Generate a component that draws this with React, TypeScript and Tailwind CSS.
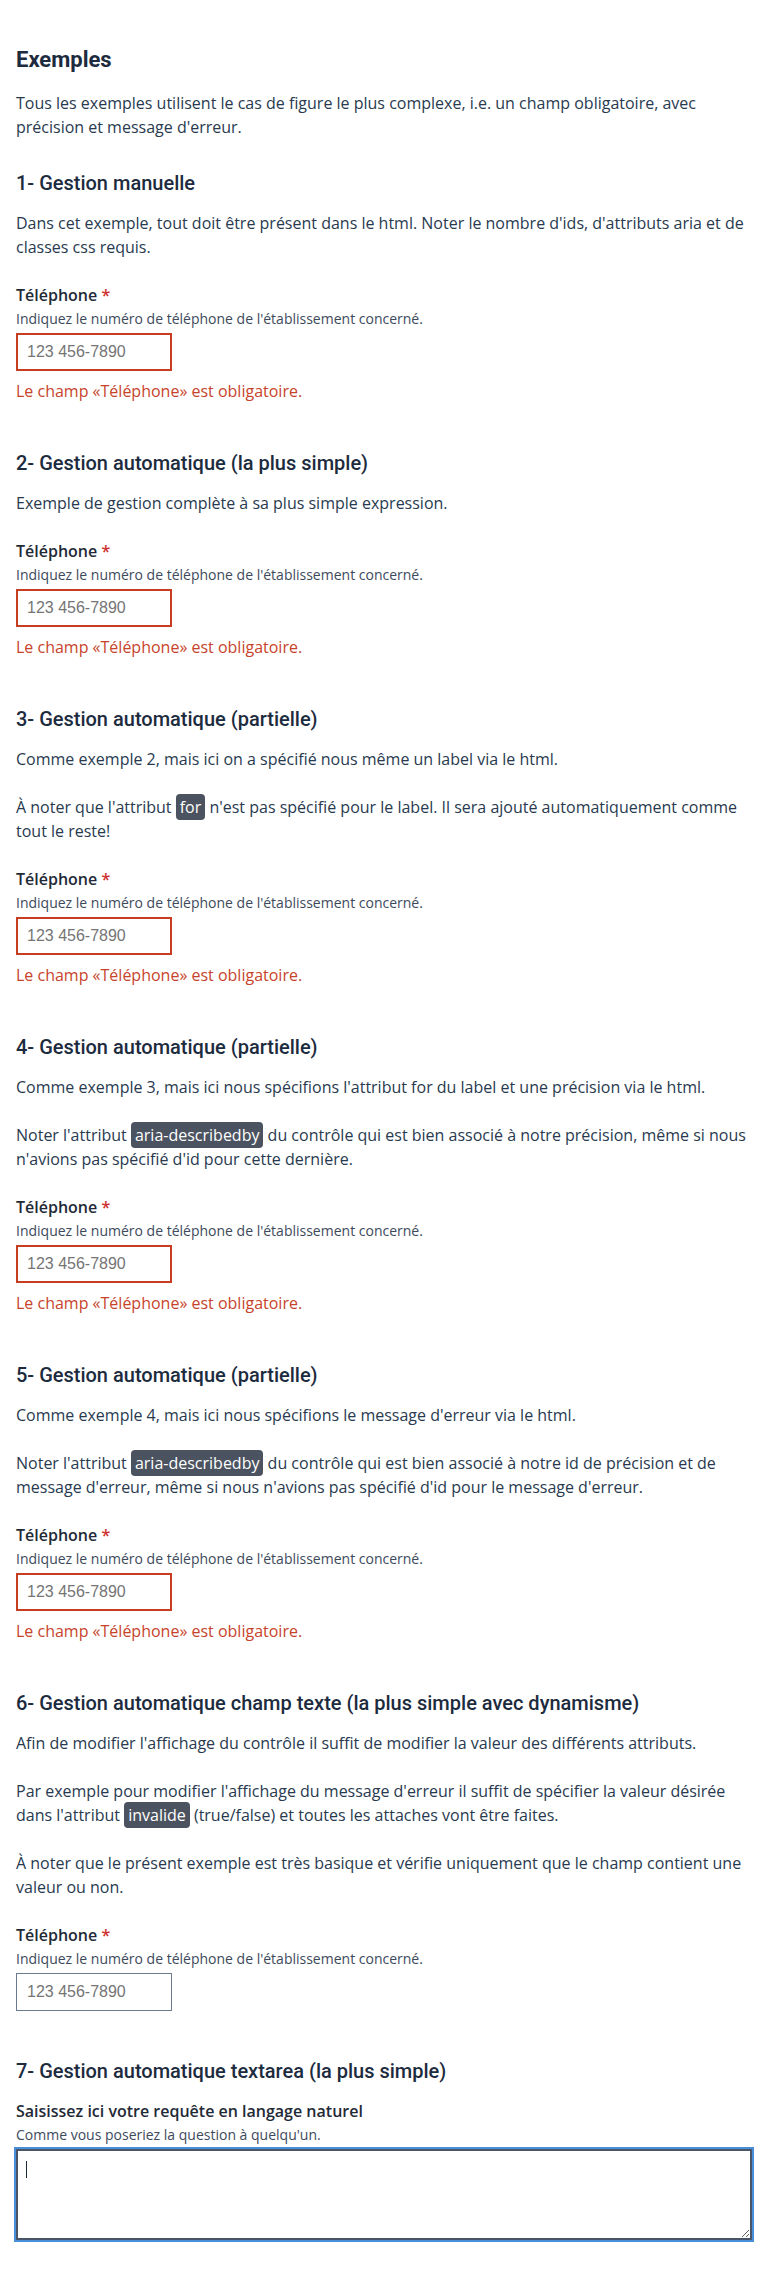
import React from "react";

const chip =
  "rounded-[4px] bg-[#4b5360] px-[4px] py-[2px] text-white";

function Heading({ children, first }: { children: React.ReactNode; first?: boolean }) {
  return (
    <h2
      className={
        (first ? "mt-[30px] " : "mt-[46px] ") +
        "mb-[14px] font-['Roboto',sans-serif] text-[20px] leading-[28px] font-medium text-[#1d2b3e]"
      }
    >
      {children}
    </h2>
  );
}

function Field({ error = true }: { error?: boolean }) {
  return (
    <div>
      <label className="block text-[16px] leading-6 font-semibold text-[#1f2a37]">
        Téléphone <span className="text-[#d0312d]">*</span>
      </label>
      <p className="mt-[3px] text-[14px] leading-[18px] text-[#3d4a5c]">
        Indiquez le numéro de téléphone de l'établissement concerné.
      </p>
      {error ? (
        <input
          type="tel"
          placeholder="123 456-7890"
          className="mt-[5px] block h-[38px] w-[156px] border-2 border-[#c83d22] bg-white pl-[9px] font-['Liberation_Sans',Arial,sans-serif] text-[16px] text-[#1f2a37] outline-none placeholder:text-[#757575]"
        />
      ) : (
        <input
          type="tel"
          placeholder="123 456-7890"
          className="mt-[5px] block h-[38px] w-[156px] border border-[#6b7a8f] bg-white pl-[10px] font-['Liberation_Sans',Arial,sans-serif] text-[16px] text-[#1f2a37] outline-none placeholder:text-[#757575]"
        />
      )}
      {error && (
        <p className="mt-2 text-[16px] leading-6 text-[#c8432b]">
          Le champ «Téléphone» est obligatoire.
        </p>
      )}
    </div>
  );
}

export default function App() {
  return (
    <div className="min-h-screen bg-white font-['Open_Sans',sans-serif] text-[16px] leading-6 text-[#293a4f]">
      <main className="px-4 pt-[45px] pb-8">
        <h1 className="font-['Roboto',sans-serif] text-[22px] leading-[30px] font-bold text-[#1d2b3e]">
          Exemples
        </h1>
        <p className="mt-4">
          Tous les exemples utilisent le cas de figure le plus complexe, i.e. un champ obligatoire, avec
          précision et message d'erreur.
        </p>

        <section>
          <Heading first>1- Gestion manuelle</Heading>
          <div className="flex flex-col gap-6">
            <p>
              Dans cet exemple, tout doit être présent dans le html. Noter le nombre d'ids, d'attributs aria et de
              classes css requis.
            </p>
            <Field />
          </div>
        </section>

        <section>
          <Heading>2- Gestion automatique (la plus simple)</Heading>
          <div className="flex flex-col gap-6">
            <p>Exemple de gestion complète à sa plus simple expression.</p>
            <Field />
          </div>
        </section>

        <section>
          <Heading>3- Gestion automatique (partielle)</Heading>
          <div className="flex flex-col gap-6">
            <p>Comme exemple 2, mais ici on a spécifié nous même un label via le html.</p>
            <p>
              À noter que l'attribut <span className={chip}>for</span> n'est pas spécifié pour le label. Il sera
              ajouté automatiquement comme tout le reste!
            </p>
            <Field />
          </div>
        </section>

        <section>
          <Heading>4- Gestion automatique (partielle)</Heading>
          <div className="flex flex-col gap-6">
            <p>Comme exemple 3, mais ici nous spécifions l'attribut for du label et une précision via le html.</p>
            <p>
              Noter l'attribut <span className={chip}>aria-describedby</span> du contrôle qui est bien associé à
              notre précision, même si nous n'avions pas spécifié d'id pour cette dernière.
            </p>
            <Field />
          </div>
        </section>

        <section>
          <Heading>5- Gestion automatique (partielle)</Heading>
          <div className="flex flex-col gap-6">
            <p>Comme exemple 4, mais ici nous spécifions le message d'erreur via le html.</p>
            <p>
              Noter l'attribut <span className={chip}>aria-describedby</span> du contrôle qui est bien associé à
              notre id de précision et de message d'erreur, même si nous n'avions pas spécifié d'id pour le
              message d'erreur.
            </p>
            <Field />
          </div>
        </section>

        <section>
          <Heading>6- Gestion automatique champ texte (la plus simple avec dynamisme)</Heading>
          <div className="flex flex-col gap-6">
            <p>Afin de modifier l'affichage du contrôle il suffit de modifier la valeur des différents attributs.</p>
            <p>
              Par exemple pour modifier l'affichage du message d'erreur il suffit de spécifier la valeur désirée
              dans l'attribut <span className={chip}>invalide</span> (true/false) et toutes les attaches vont être
              faites.
            </p>
            <p>
              À noter que le présent exemple est très basique et vérifie uniquement que le champ contient une
              valeur ou non.
            </p>
            <Field error={false} />
          </div>
        </section>

        <section>
          <Heading>7- Gestion automatique textarea (la plus simple)</Heading>
          <div>
            <label className="block text-[16px] leading-6 font-semibold text-[#1f2a37]">
              Saisissez ici votre requête en langage naturel
            </label>
            <p className="mt-[3px] text-[14px] leading-[18px] text-[#3d4a5c]">
              Comme vous poseriez la question à quelqu'un.
            </p>
            <div className="relative mt-[5px]">
              <textarea className="block h-[91px] w-full border-2 border-[#4a5568] bg-white p-2 text-[16px] leading-6 text-[#1f2a37] outline-2 outline-[#4a90d9]" />
              <span className="pointer-events-none absolute left-[10px] top-[12px] h-[17px] w-px bg-[#1f2a37]" />
            </div>
          </div>
        </section>
      </main>
    </div>
  );
}
